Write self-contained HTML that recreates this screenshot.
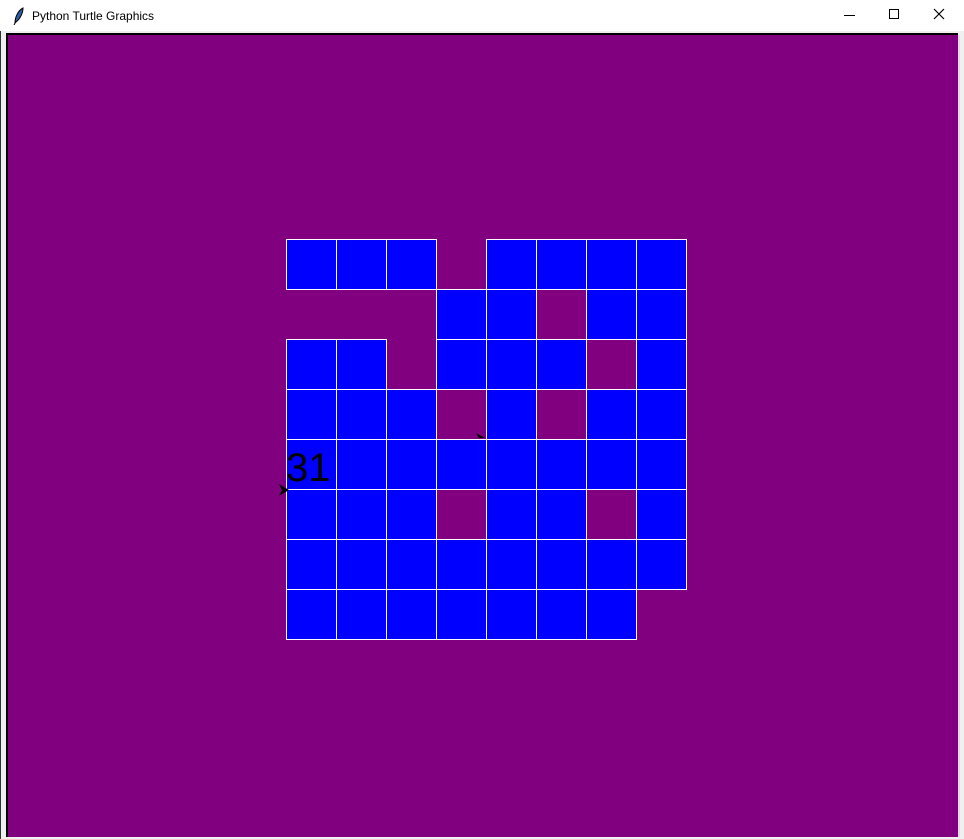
<!DOCTYPE html>
<html><head><style>
body{margin:0;width:964px;height:839px;background:#f0f0f0;position:relative;overflow:hidden;font-family:"Liberation Sans",sans-serif}
.a{position:absolute}
#title{left:0;top:0;width:964px;height:31px;background:#fff}
#cv{left:6px;top:33px;width:952px;height:804px;background:#800080;border-left:2px solid #000;border-top:2px solid #000;box-sizing:border-box}
.c{position:absolute;width:51px;height:51px;background:#00f;box-sizing:border-box;border:1px solid #fff}
</style></head><body>
<div class="a" style="left:0;top:0;width:1px;height:839px;background:#333"></div>
<div class="a" id="title"></div>
<svg class="a" style="left:12px;top:7px" width="14" height="18" viewBox="0 0 14 18"><path d="M3 16 C3 9 7 3 11 1 C11 6 8 12 4 15 Z" fill="#2a5fa8" stroke="#000" stroke-width="1"/><path d="M3 16 L2 18" stroke="#000"/></svg>
<div class="a" style="left:32px;top:9px;font-size:12px;color:#000">Python Turtle Graphics</div>
<div class="a" style="left:844px;top:15px;width:11px;height:1px;background:#000"></div>
<div class="a" style="left:889px;top:9px;width:10px;height:10px;border:1px solid #000;box-sizing:border-box"></div>
<svg class="a" style="left:933px;top:8px" width="12" height="12"><path d="M1 1L11 11M11 1L1 11" stroke="#000" stroke-width="1.2"/></svg>
<div class="a" id="cv"></div>
<div class="a" style="left:958px;top:35px;width:2px;height:802px;background:#e8d8e8"></div>
<div id="g"></div>
<div class="a" style="left:286px;top:445px;font-size:40px;color:#000;line-height:46px">31</div>
<svg class="a" style="left:278px;top:483px" width="12" height="14"><path d="M1 1 L11 7 L1 13 L4 7 Z" fill="#000"/></svg>
<svg class="a" style="left:475px;top:432px" width="12" height="8"><path d="M1 1 L10 6 L4 6 Z" fill="#000"/></svg>
<script>
var rows=["11101111","00011011","11011101","11101011","11111111","11101101","11111111","11111110"];
var h="";
rows.forEach(function(r,i){for(var j=0;j<8;j++)if(r[j]=="1")h+='<div class="c" style="left:'+(286+j*50)+'px;top:'+(239+i*50)+'px"></div>';});
document.getElementById("g").innerHTML=h;
</script>
</body></html>
